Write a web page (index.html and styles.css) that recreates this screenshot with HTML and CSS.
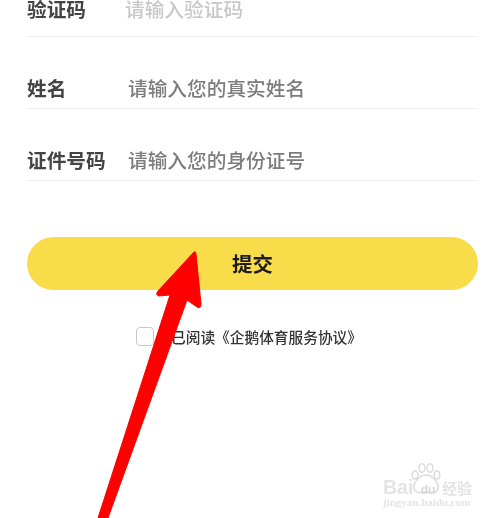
FILE: index.html
```html
<!DOCTYPE html>
<html lang="zh">
<head>
<meta charset="utf-8">
<title>提交</title>
<link rel="stylesheet" href="styles.css">
</head>
<body>
<main class="page">
  <form class="form">
    <div class="row row-faded">
      <span class="label">验证码</span>
      <span class="hint hint-faded">请输入验证码</span>
    </div>
    <div class="row">
      <span class="label">姓名</span>
      <span class="hint">请输入您的真实姓名</span>
    </div>
    <div class="row">
      <span class="label">证件号码</span>
      <span class="hint">请输入您的身份证号</span>
    </div>
    <button class="submit" type="button">提交</button>
    <div class="agree">
      <span class="check"></span>
      <span class="agree-text">已阅读《企鹅体育服务协议》</span>
    </div>
  </form>
</main>
<svg class="arrow" viewBox="0 0 500 518" width="500" height="518" aria-hidden="true">
  <path d="M194 252 Q196 251 196 254 L201 304 Q201 309 197 307 L187 300 L108 518 L98 518 L170 295 L159 296 Q155 295 158 291 Z" fill="#ff0000" stroke="#ff0000" stroke-width="1" stroke-linejoin="round"/>
</svg>
<div class="mark">
  <svg class="paw" viewBox="0 0 30 32" width="30" height="32" aria-hidden="true">
    <g fill="#fff" stroke="#dcdcdc" stroke-width="1.5">
      <ellipse cx="4" cy="12" rx="2.8" ry="4"/>
      <ellipse cx="11" cy="5" rx="3" ry="4.2"/>
      <ellipse cx="19" cy="5" rx="3" ry="4.2"/>
      <ellipse cx="26" cy="12" rx="2.8" ry="4"/>
      <path d="M15 12 C20 12 24 16 26 20 C29 25 26 30 21 29.500 C17 29 13 29 9 29.500 C4 30 1 25 4 20 C6 16 10 12 15 12 Z"/>
    </g>
  </svg>
  <div class="mark-logo"><span class="mark-bai">Bai</span><span class="mark-du">du</span><span class="mark-cn">经验</span></div>
  <div class="mark-url">jingyan.baidu.com</div>
</div>
</body>
</html>
```
FILE: styles.css
```css
html, body {
  margin: 0;
  padding: 0;
  background: #fff;
}
body {
  width: 500px;
  height: 518px;
  overflow: hidden;
  position: relative;
  font-family: "Noto Sans CJK SC", "Liberation Sans", sans-serif;
}
.page {
  filter: blur(0.7px);
}
.form {
  display: flex;
  flex-direction: column;
  margin-top: -35px;
  padding: 0 22px 0 27px;
}
.row {
  height: 72px;
  box-sizing: border-box;
  display: flex;
  align-items: center;
  padding-top: 30px;
  border-bottom: 1px solid #f0f0f0;
  font-size: 19.7px;
  line-height: 28px;
}
.row-faded {
  padding-top: 16px;
}
.label {
  width: 101px;
  flex: none;
  color: #444;
  font-weight: 700;
  white-space: nowrap;
}
.row-faded .label {
  width: 98px;
}
.hint {
  color: #7c7c7c;
  font-weight: 500;
  white-space: nowrap;
}
.hint-faded {
  color: #c8c8c8;
}
.submit {
  margin-top: 56px;
  height: 53px;
  border: 0;
  border-radius: 27px;
  background: #f9dc4a;
  color: #1c1c1c;
  font: 700 20.5px "Noto Sans CJK SC", sans-serif;
  padding: 0 0 2px;
}
.agree {
  margin-top: 37px;
  display: flex;
  align-items: center;
  padding-left: 109px;
  gap: 17px;
}
.check {
  width: 16px;
  height: 17px;
  flex: none;
  border: 1px solid #c8c8c8;
  border-radius: 4px;
}
.agree-text {
  font-size: 14.7px;
  font-weight: 500;
  line-height: 19px;
  color: #333;
  white-space: nowrap;
}
.arrow {
  position: absolute;
  left: 0;
  top: 0;
  filter: blur(0.6px);
}
.mark {
  position: absolute;
  left: 380px;
  top: 463px;
  width: 110px;
  height: 44px;
  color: #e4e4e4;
  filter: blur(0.4px);
}
.paw {
  position: absolute;
  left: 31px;
  top: 0;
}
.mark-logo {
  position: absolute;
  left: 3px;
  top: 14px;
  display: flex;
  align-items: baseline;
  white-space: nowrap;
  line-height: 20px;
}
.mark-bai {
  font: 700 19.5px/20px "Liberation Sans", sans-serif;
  width: 34px;
}
.mark-du {
  font: 700 12px/20px "Liberation Sans", sans-serif;
  width: 22px;
  text-align: center;
  color: #d8d8d8;
}
.mark-cn {
  font: 700 15px/20px "Noto Sans CJK SC", sans-serif;
  margin-left: 3px;
}
.mark-url {
  position: absolute;
  left: 3px;
  top: 32px;
  font: 700 11px/14px "Liberation Serif", serif;
  white-space: nowrap;
  color: #e4e4e4;
}
```
